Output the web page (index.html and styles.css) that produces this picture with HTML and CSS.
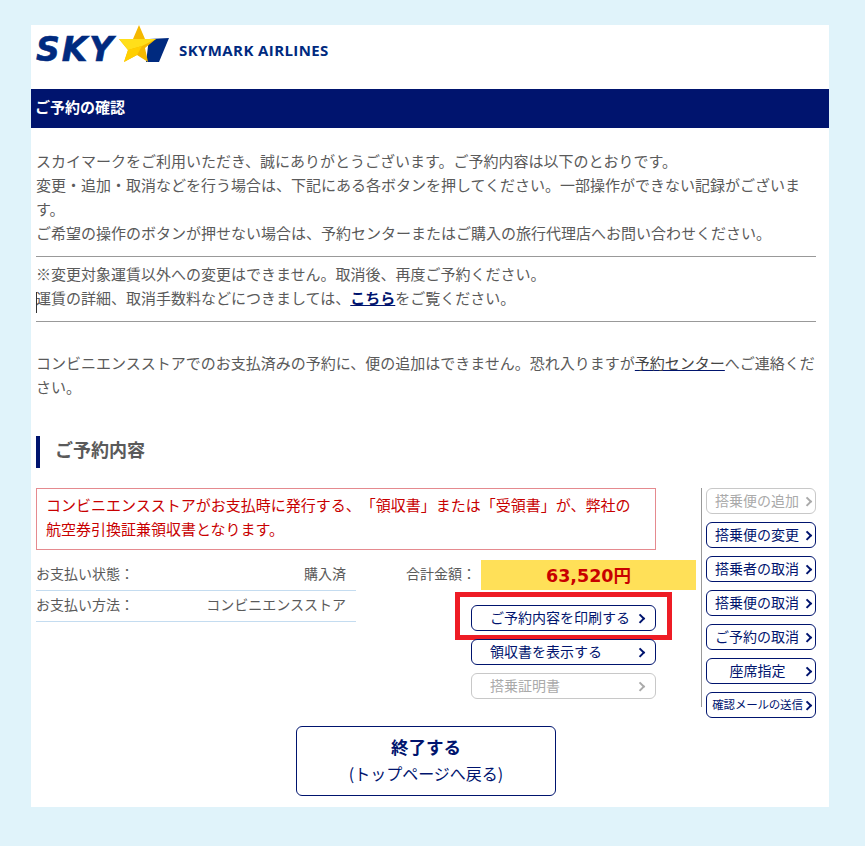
FILE: index.html
```html
<!DOCTYPE html>
<html lang="ja">
<head>
<meta charset="UTF-8">
<meta name="viewport" content="width=device-width, initial-scale=1.0">
<title>ご予約の確認 - SKYMARK AIRLINES</title>
<link rel="stylesheet" href="styles.css">
</head>
<body>
<div class="panel">
    <header class="site-header">
        <span class="logo-sky">SKY</span>
        <svg class="logo-star" width="56" height="38" viewBox="0 0 56 38">
            <polygon points="34,14 54,13 44,37 31,37" fill="#002a7f"/>
            <polygon points="24,0 30,14 41,14 30,23 33,37 22,30 9,37 13,25 4,14 18,14" fill="#f5b800"/>
            <polygon points="18,14 30,14 41,14 27,21 13,25 4,14" fill="#ffdf1a"/>
            <polygon points="13,25 27,21 22,30 9,37" fill="#ffcf00"/>
        </svg>
        <span class="logo-name">SKYMARK AIRLINES</span>
    </header>

    <h1 class="page-title">ご予約の確認</h1>

    <div class="content">
        <p class="intro">スカイマークをご利用いただき、誠にありがとうございます。ご予約内容は以下のとおりです。<br>変更・追加・取消などを行う場合は、下記にある各ボタンを押してください。一部操作ができない記録がございます。<br>ご希望の操作のボタンが押せない場合は、予約センターまたはご購入の旅行代理店へお問い合わせください。</p>

        <div class="fare-note">
            <p>※変更対象運賃以外への変更はできません。取消後、再度ご予約ください。</p>
            <p><span class="caret"></span>運賃の詳細、取消手数料などにつきましては、<a class="link-strong" href="#">こちら</a>をご覧ください。</p>
        </div>

        <p class="store-note">コンビニエンスストアでのお支払済みの予約に、便の追加はできません。恐れ入りますが<a class="link-plain" href="#">予約センター</a>へご連絡ください。</p>

        <h2 class="section-title">ご予約内容</h2>

        <div class="booking">
            <div class="booking-main">
                <p class="receipt-note">コンビニエンスストアがお支払時に発行する、「領収書」または「受領書」が、弊社の航空券引換証兼領収書となります。</p>

                <div class="booking-row">
                    <dl class="pay-info">
                        <div class="pay-row"><dt>お支払い状態：</dt><dd>購入済</dd></div>
                        <div class="pay-row"><dt>お支払い方法：</dt><dd>コンビニエンスストア</dd></div>
                    </dl>
                    <div class="summary">
                        <div class="total">
                            <span class="total-label">合計金額：</span>
                            <span class="total-value">63,520円</span>
                        </div>
                        <div class="doc-buttons">
                            <a class="btn highlighted" href="#">ご予約内容を印刷する</a>
                            <a class="btn" href="#">領収書を表示する</a>
                            <a class="btn disabled" href="#">搭乗証明書</a>
                        </div>
                    </div>
                </div>
            </div>

            <nav class="side-buttons">
                <a class="btn disabled" href="#">搭乗便の追加</a>
                <a class="btn" href="#">搭乗便の変更</a>
                <a class="btn" href="#">搭乗者の取消</a>
                <a class="btn" href="#">搭乗便の取消</a>
                <a class="btn" href="#">ご予約の取消</a>
                <a class="btn seat" href="#">座席指定</a>
                <a class="btn small" href="#">確認メールの送信</a>
            </nav>
        </div>

        <a class="finish" href="#">
            <strong>終了する</strong>
            <span>(トップページへ戻る)</span>
        </a>
    </div>
</div>
</body>
</html>
```

FILE: styles.css
```css
*, *::before, *::after {
    box-sizing: border-box;
}
body {
    margin: 0;
    padding: 25px 36px 39px 31px;
    background-color: #e0f3fa;
    color: #5a5a5a;
    font-family: "Noto Sans CJK JP", "Noto Sans", sans-serif;
    font-size: 15px;
    line-height: 24px;
    text-spacing-trim: space-all;
}
p, h1, h2, dl, dd {
    margin: 0;
}
a {
    color: #00146e;
}
.panel {
    width: 798px;
    background-color: #fff;
    padding-bottom: 11px;
}
.site-header {
    display: flex;
    align-items: flex-start;
    height: 64px;
    padding-left: 5px;
}
.logo-sky {
    width: 79px;
    margin-top: 13px;
    color: #002a7f;
    font-family: "DejaVu Sans", sans-serif;
    font-size: 33px;
    font-style: italic;
    font-weight: bold;
    letter-spacing: 2px;
    line-height: 24px;
    -webkit-text-stroke: 0.6px #002a7f;
}
.logo-star {
    flex: none;
}
.logo-name {
    margin: 15px 0 0 8px;
    color: #002a7f;
    font-family: "Open Sans", sans-serif;
    font-size: 15px;
    font-weight: bold;
    letter-spacing: 0.4px;
    line-height: 20px;
    white-space: nowrap;
}
.page-title {
    height: 39px;
    padding-left: 4px;
    background-color: #00146e;
    color: #fff;
    font-size: 15px;
    font-weight: bold;
    line-height: 36px;
}
.content {
    padding: 21px 13px 0 5px;
}
.fare-note {
    position: relative;
    margin-top: 11px;
    padding: 5px 0 11px;
    border-top: 1px solid #999;
    border-bottom: 1px solid #999;
}
.caret {
    position: absolute;
    left: 0;
    top: 35px;
    width: 1px;
    height: 21px;
    background-color: #333;
}
.link-strong {
    font-weight: bold;
}
.store-note {
    margin-top: 29px;
}
.link-plain {
    color: #444;
    text-decoration-color: #00146e;
}
.section-title {
    margin-top: 37px;
    height: 32px;
    padding-left: 15px;
    border-left: 4px solid #00146e;
    font-size: 18px;
    font-weight: bold;
    line-height: 26px;
}
.booking {
    display: flex;
    justify-content: space-between;
    margin-top: 20px;
}
.booking-main {
    width: 660px;
}
.receipt-note {
    width: 620px;
    height: 62px;
    padding: 4px 14px 4px 9px;
    border: 1px solid #e58a8f;
    color: #c80000;
}
.booking-row {
    display: flex;
    margin-top: 10px;
}
.pay-info {
    width: 320px;
    margin-right: 50px;
    font-size: 14px;
}
.pay-row {
    display: flex;
    justify-content: space-between;
    height: 31px;
    padding: 1px 10px 0 0;
    border-bottom: 1px solid #c4dcf0;
}
.summary {
    width: 290px;
}
.total {
    display: flex;
    align-items: center;
    justify-content: space-between;
    height: 30px;
    font-size: 14px;
}
.total-label {
    margin-bottom: 4px;
}
.total-value {
    width: 215px;
    height: 30px;
    background-color: #ffe058;
    color: #c80000;
    font-family: "DejaVu Sans", "Noto Sans CJK JP", sans-serif;
    font-size: 17.5px;
    font-weight: bold;
    line-height: 32px;
    text-align: center;
}
.doc-buttons {
    display: flex;
    flex-direction: column;
    gap: 8px;
    width: 185px;
    margin: 15px 0 0 65px;
}
.btn {
    position: relative;
    display: block;
    height: 26px;
    padding-right: 14px;
    border: 1px solid #00146e;
    border-radius: 6px;
    background-color: #fff;
    color: #00146e;
    font-size: 14px;
    line-height: 23px;
    text-decoration: none;
    text-align: center;
    white-space: nowrap;
}
.btn::after {
    content: "";
    position: absolute;
    right: 12px;
    top: 9px;
    width: 6.5px;
    height: 6.5px;
    border-top: 2px solid #00146e;
    border-right: 2px solid #00146e;
    transform: rotate(45deg);
}
.btn.disabled {
    border-color: #c8c8c8;
    color: #aaa;
}
.btn.disabled::after {
    border-color: #aaa;
}
.doc-buttons .btn {
    padding-right: 0;
    padding-left: 18px;
    text-align: left;
}
.highlighted::before {
    content: "";
    position: absolute;
    left: -17px;
    top: -14px;
    width: 217px;
    height: 48px;
    border: 5px solid #ee1c25;
    pointer-events: none;
}
.side-buttons {
    display: flex;
    flex-direction: column;
    gap: 8px;
    width: 115px;
    height: 219px;
    padding-left: 4px;
    border-left: 1px solid #999;
}
.side-buttons .btn {
    flex: none;
    padding-right: 8px;
}
.side-buttons .btn::after {
    right: 5px;
}
.side-buttons .seat {
    padding-right: 7px;
}
.side-buttons .small {
    padding-right: 7px;
    font-size: 11.5px;
    letter-spacing: -0.2px;
}
.finish {
    display: block;
    width: 260px;
    height: 70px;
    margin: 19px 0 0 260px;
    padding-top: 7px;
    border: 1px solid #00146e;
    border-radius: 6px;
    text-decoration: none;
    text-align: center;
}
.finish strong {
    display: block;
    font-size: 17.5px;
    line-height: 26px;
}
.finish span {
    display: block;
    font-size: 16px;
    line-height: 26px;
}
```
